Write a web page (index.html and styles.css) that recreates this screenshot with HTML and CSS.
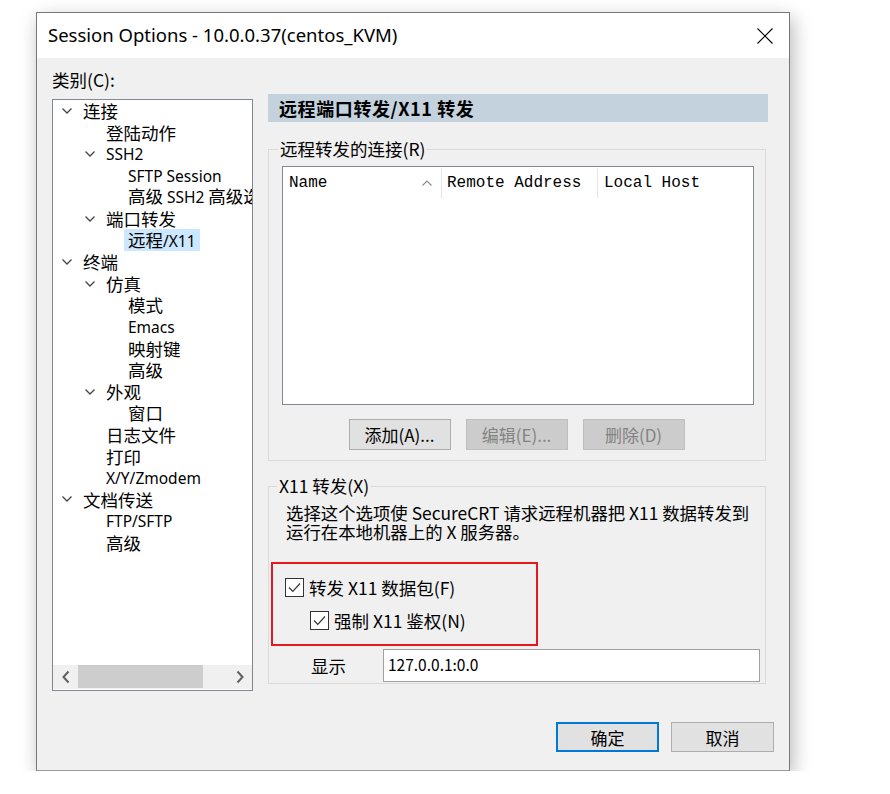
FILE: index.html
```html
<!DOCTYPE html>
<html lang="zh-CN">
<head>
<meta charset="utf-8">
<title>Session Options</title>
<link rel="stylesheet" href="styles.css">
</head>
<body>
<div class="window">
  <div class="titlebar">
    <span class="title">Session Options - 10.0.0.37(centos_KVM)</span>
    <svg class="close" width="16" height="16" viewBox="0 0 16 16"><path d="M0.5 0.5 L15.5 15.5 M15.5 0.5 L0.5 15.5" stroke="#000" stroke-width="1.1" fill="none"/></svg>
  </div>
  <div class="content">
    <div class="main">
      <div class="leftcol">
        <div class="catlabel">类别(C):</div>
        <div class="tree">
          <div class="tree-items">
            <div class="row l0"><span class="chev"><svg width="12" height="8" viewBox="0 0 12 8"><path d="M1.5 1.5 L6 6 L10.5 1.5" stroke="#444" stroke-width="1.3" fill="none"/></svg></span><span class="txt">连接</span></div>
            <div class="row l1"><span class="chev"></span><span class="txt">登陆动作</span></div>
            <div class="row l1"><span class="chev"><svg width="12" height="8" viewBox="0 0 12 8"><path d="M1.5 1.5 L6 6 L10.5 1.5" stroke="#444" stroke-width="1.3" fill="none"/></svg></span><span class="txt"><span class="en">SSH2</span></span></div>
            <div class="row l2"><span class="chev"></span><span class="txt"><span class="en">SFTP Session</span></span></div>
            <div class="row l2"><span class="chev"></span><span class="txt">高级 <span class="en">SSH2</span> 高级选项</span></div>
            <div class="row l1"><span class="chev"><svg width="12" height="8" viewBox="0 0 12 8"><path d="M1.5 1.5 L6 6 L10.5 1.5" stroke="#444" stroke-width="1.3" fill="none"/></svg></span><span class="txt">端口转发</span></div>
            <div class="row l2"><span class="chev"></span><span class="txt selected">远程<span class="en">/X11</span></span></div>
            <div class="row l0"><span class="chev"><svg width="12" height="8" viewBox="0 0 12 8"><path d="M1.5 1.5 L6 6 L10.5 1.5" stroke="#444" stroke-width="1.3" fill="none"/></svg></span><span class="txt">终端</span></div>
            <div class="row l1"><span class="chev"><svg width="12" height="8" viewBox="0 0 12 8"><path d="M1.5 1.5 L6 6 L10.5 1.5" stroke="#444" stroke-width="1.3" fill="none"/></svg></span><span class="txt">仿真</span></div>
            <div class="row l2"><span class="chev"></span><span class="txt">模式</span></div>
            <div class="row l2"><span class="chev"></span><span class="txt"><span class="en">Emacs</span></span></div>
            <div class="row l2"><span class="chev"></span><span class="txt">映射键</span></div>
            <div class="row l2"><span class="chev"></span><span class="txt">高级</span></div>
            <div class="row l1"><span class="chev"><svg width="12" height="8" viewBox="0 0 12 8"><path d="M1.5 1.5 L6 6 L10.5 1.5" stroke="#444" stroke-width="1.3" fill="none"/></svg></span><span class="txt">外观</span></div>
            <div class="row l2"><span class="chev"></span><span class="txt">窗口</span></div>
            <div class="row l1"><span class="chev"></span><span class="txt">日志文件</span></div>
            <div class="row l1"><span class="chev"></span><span class="txt">打印</span></div>
            <div class="row l1"><span class="chev"></span><span class="txt"><span class="en">X/Y/Zmodem</span></span></div>
            <div class="row l0"><span class="chev"><svg width="12" height="8" viewBox="0 0 12 8"><path d="M1.5 1.5 L6 6 L10.5 1.5" stroke="#444" stroke-width="1.3" fill="none"/></svg></span><span class="txt">文档传送</span></div>
            <div class="row l1"><span class="chev"></span><span class="txt"><span class="en">FTP/SFTP</span></span></div>
            <div class="row l1"><span class="chev"></span><span class="txt">高级</span></div>
          </div>
          <div class="hscroll">
            <span class="sarrow"><svg width="10" height="14" viewBox="0 0 10 14"><path d="M7.5 1.5 L2.5 7 L7.5 12.5" stroke="#606060" stroke-width="2" fill="none"/></svg></span>
            <div class="strack"><div class="sthumb"></div></div>
            <span class="sarrow"><svg width="10" height="14" viewBox="0 0 10 14"><path d="M2.5 1.5 L7.5 7 L2.5 12.5" stroke="#606060" stroke-width="2" fill="none"/></svg></span>
          </div>
        </div>
      </div>
      <div class="rightcol">
        <div class="pagehead">远程端口转发/X11 转发</div>
        <fieldset class="group g1">
          <legend>远程转发的连接(R)</legend>
          <div class="listview">
            <div class="lv-head">
              <div class="lv-col c1"><span>Name</span><svg class="sort" width="12" height="8" viewBox="0 0 12 8"><path d="M1.5 6.5 L6 2 L10.5 6.5" stroke="#8a8a8a" stroke-width="1.1" fill="none"/></svg></div>
              <div class="lv-col c2"><span>Remote Address</span></div>
              <div class="lv-col c3"><span>Local Host</span></div>
            </div>
          </div>
          <div class="btnrow">
            <div class="btn">添加(A)...</div>
            <div class="btn disabled">编辑(E)...</div>
            <div class="btn disabled">删除(D)</div>
          </div>
        </fieldset>
        <fieldset class="group g2">
          <legend>X11 转发(X)</legend>
          <div class="desc">选择这个选项使 SecureCRT 请求远程机器把 X11 数据转发到<br>运行在本地机器上的 X 服务器。</div>
          <div class="redbox">
            <div class="check">
              <svg class="cb" width="19" height="19" viewBox="0 0 19 19"><rect x="0.5" y="0.5" width="18" height="18" fill="#fff" stroke="#333"/><path d="M4 9.5 L7.8 13.3 L15 5.5" stroke="#333" stroke-width="1.2" fill="none"/></svg>
              <span>转发 X11 数据包(F)</span>
            </div>
            <div class="check sub">
              <svg class="cb" width="19" height="19" viewBox="0 0 19 19"><rect x="0.5" y="0.5" width="18" height="18" fill="#fff" stroke="#333"/><path d="M4 9.5 L7.8 13.3 L15 5.5" stroke="#333" stroke-width="1.2" fill="none"/></svg>
              <span>强制 X11 鉴权(N)</span>
            </div>
          </div>
          <div class="disprow">
            <span class="displabel">显示</span>
            <div class="textbox">127.0.0.1:0.0</div>
          </div>
        </fieldset>
      </div>
    </div>
    <div class="footer">
      <div class="btn fbtn default">确定</div>
      <div class="btn fbtn">取消</div>
    </div>
  </div>
</div>
</body>
</html>
```

FILE: styles.css
```css
* { box-sizing: border-box; }

html, body {
  margin: 0;
  padding: 0;
  background: #ffffff;
}

body {
  padding: 12px 0 0 36px;
  font-family: "Noto Sans CJK SC", "Noto Sans", sans-serif;
  font-size: 17.5px;
  color: #000;
}

.window {
  width: 754px;
  height: 759px;
  border: 1px solid #777;
  border-bottom-color: #999;
  background: #f0f0f0;
  box-shadow: 3px 6px 18px rgba(0, 0, 0, 0.28);
  display: flex;
  flex-direction: column;
}

.titlebar {
  height: 45px;
  background: #fff;
  display: flex;
  align-items: center;
  justify-content: space-between;
  padding: 0 16px 3px 11px;
}

.title {
  font-family: "Noto Sans", "Noto Sans CJK SC", sans-serif;
  font-size: 18.5px;
  color: #000;
}

.close { display: block; margin-top: 3px; }

.content {
  flex: 1;
  display: flex;
  flex-direction: column;
}

.main {
  display: flex;
  align-items: flex-start;
  padding-left: 15px;
}

.leftcol {
  width: 201px;
  padding-top: 11px;
}

.catlabel {
  height: 22px;
  line-height: 22px;
}

.tree {
  margin-top: 8px;
  height: 592px;
  border: 1px solid #828790;
  background: #fff;
  display: flex;
  flex-direction: column;
  overflow: hidden;
}

.tree-items {
  flex: 1;
  overflow: hidden;
}

.row {
  height: 21.6px;
  line-height: 21.6px;
  display: flex;
  align-items: center;
  white-space: nowrap;
}

.row.l0 { padding-left: 8px; }
.row.l1 { padding-left: 31px; }
.row.l2 { padding-left: 53px; }

.chev {
  width: 12px;
  flex: none;
  margin-right: 10px;
  display: flex;
  align-items: center;
}

.chev svg { display: block; }

.en {
  font-family: "Noto Sans", sans-serif;
  font-size: 15.5px;
}

.txt.selected {
  background: #cce8ff;
  margin-left: -4px;
  padding: 0 4px;
  height: 22px;
  line-height: 22px;
}

.hscroll {
  height: 24px;
  margin-bottom: 1px;
  background: #f0f0f0;
  display: flex;
  align-items: stretch;
}

.sarrow {
  width: 25px;
  display: flex;
  align-items: center;
  justify-content: center;
  flex: none;
}

.strack {
  flex: 1;
  display: flex;
}

.sthumb {
  width: 125px;
  background: #cdcdcd;
  margin-bottom: 1px;
}

.rightcol {
  width: 500px;
  margin-left: 15px;
  margin-top: 36px;
}

.pagehead {
  height: 28px;
  line-height: 28px;
  background: #c4d2de;
  padding-left: 11px;
  font-weight: bold;
  font-size: 18px;
  letter-spacing: 0.6px;
}

.group {
  margin: 0;
  border: 1px solid #dadada;
  min-inline-size: 0;
  width: 498px;
}

.group legend {
  padding: 0 2px;
  margin-left: -4px;
  height: 22px;
  line-height: 22px;
}

.g1 {
  margin-top: 16px;
  padding: 0 12px 10px 13px;
}

.listview {
  margin-top: 6px;
  width: 472px;
  height: 239px;
  border: 1px solid #828790;
  background: #fff;
}

.lv-head {
  display: flex;
  height: 32px;
  padding-top: 1px;
  font-family: "Liberation Mono", "DejaVu Sans Mono", monospace;
  font-size: 16px;
}

.lv-col {
  height: 30px;
  display: flex;
  align-items: center;
  border-right: 1px solid #e5e5e5;
  padding-left: 6px;
}

.lv-col.c1 { width: 159px; padding-left: 6px; justify-content: space-between; padding-right: 8px; }
.lv-col.c2 { width: 156px; padding-left: 5px; }
.lv-col.c3 { flex: 1; border-right: none; }

.sort { display: block; }

.btnrow {
  display: flex;
  justify-content: center;
  gap: 15px;
  margin-top: 14px;
  padding-right: 2px;
}

.btn {
  width: 102px;
  height: 31px;
  border: 1px solid #adadad;
  background: #e1e1e1;
  display: flex;
  align-items: center;
  justify-content: center;
  font-size: 17px;
}

.btn.disabled {
  background: #cccccc;
  border-color: #bfbfbf;
  color: #838383;
}

.g2 {
  margin-top: 14px;
  padding: 0 4px 1px 2px;
}

.g2 legend { margin-left: 6px; }

.desc {
  margin-top: 6px;
  margin-left: 15px;
  line-height: 19px;
  font-size: 17.4px;
  white-space: nowrap;
}

.redbox {
  margin-top: 21px;
  width: 267px;
  height: 84px;
  border: 2px solid #e8191c;
  padding: 12px 0 0 12px;
}

.check {
  display: flex;
  align-items: center;
  height: 22px;
  gap: 5px;
}

.check.sub {
  margin-top: 11px;
  padding-left: 25px;
}

.cb { display: block; flex: none; }

.disprow {
  margin-top: 3px;
  display: flex;
  align-items: center;
}

.displabel {
  width: 72px;
  margin-left: 40px;
}

.textbox {
  width: 377px;
  height: 33px;
  border: 1px solid #a0a0a0;
  background: #fff;
  padding: 4px 0 0 4px;
  font-size: 15.5px;
  line-height: 20px;
}

.footer {
  display: flex;
  justify-content: flex-end;
  gap: 12px;
  margin-top: 31px;
  padding-right: 15px;
}

.fbtn {
  width: 103px;
  height: 30px;
}

.fbtn.default {
  border: 2px solid #0078d7;
}
```
